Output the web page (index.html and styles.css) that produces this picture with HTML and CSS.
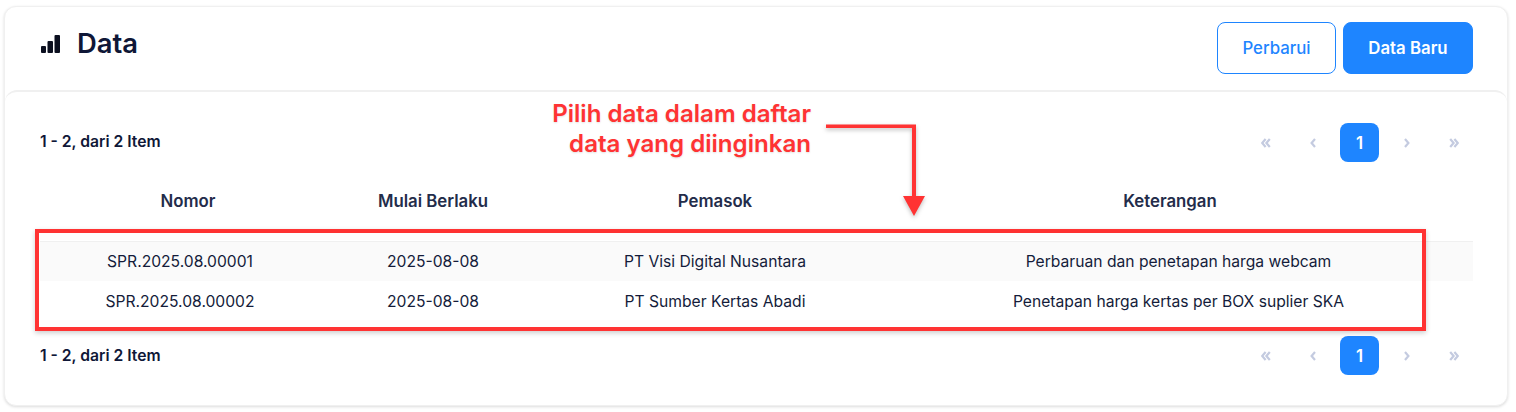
FILE: index.html
```html
<!DOCTYPE html>
<html lang="id">
<head>
<meta charset="utf-8">
<title>Data</title>
<link rel="stylesheet" href="styles.css">
</head>
<body>
<main class="card">
  <header class="card-head">
    <h1 class="title">
      <svg class="title-icon" viewBox="0 0 19 18" width="19" height="18" aria-hidden="true">
        <rect x="0" y="11" width="5" height="7" rx="1"/>
        <rect x="6.5" y="6" width="5.5" height="12" rx="1"/>
        <rect x="13.5" y="0" width="5.5" height="18" rx="1"/>
      </svg>
      Data
    </h1>
    <div class="actions">
      <button class="btn btn-outline">Perbarui</button>
      <button class="btn btn-solid">Data Baru</button>
    </div>
  </header>
  <section class="card-body">
    <div class="bar">
      <span class="count">1 - 2, dari 2 Item</span>
      <nav class="pager">
        <span class="page"><svg class="chev" viewBox="0 0 10 10" width="10" height="10"><path d="M4.6 1L1.2 5L4.6 9M8.8 1L5.4 5L8.8 9"/></svg></span>
        <span class="page"><svg class="chev" viewBox="0 0 10 10" width="10" height="10"><path d="M7 1L3.6 5L7 9"/></svg></span>
        <span class="page current">1</span>
        <span class="page"><svg class="chev" viewBox="0 0 10 10" width="10" height="10"><path d="M3 1L6.4 5L3 9"/></svg></span>
        <span class="page"><svg class="chev" viewBox="0 0 10 10" width="10" height="10"><path d="M1.2 1L4.6 5L1.2 9M5.4 1L8.8 5L5.4 9"/></svg></span>
      </nav>
    </div>
    <div class="thead">
      <div>Nomor</div><div>Mulai Berlaku</div><div>Pemasok</div><div>Keterangan</div>
    </div>
    <div class="tbody">
      <div class="row odd">
        <div>SPR.2025.08.00001</div><div>2025-08-08</div><div>PT Visi Digital Nusantara</div><div>Perbaruan dan penetapan harga webcam</div>
      </div>
      <div class="row">
        <div>SPR.2025.08.00002</div><div>2025-08-08</div><div>PT Sumber Kertas Abadi</div><div>Penetapan harga kertas per BOX suplier SKA</div>
      </div>
    </div>
    <div class="bar bar-bottom">
      <span class="count">1 - 2, dari 2 Item</span>
      <nav class="pager">
        <span class="page"><svg class="chev" viewBox="0 0 10 10" width="10" height="10"><path d="M4.6 1L1.2 5L4.6 9M8.8 1L5.4 5L8.8 9"/></svg></span>
        <span class="page"><svg class="chev" viewBox="0 0 10 10" width="10" height="10"><path d="M7 1L3.6 5L7 9"/></svg></span>
        <span class="page current">1</span>
        <span class="page"><svg class="chev" viewBox="0 0 10 10" width="10" height="10"><path d="M3 1L6.4 5L3 9"/></svg></span>
        <span class="page"><svg class="chev" viewBox="0 0 10 10" width="10" height="10"><path d="M1.2 1L4.6 5L1.2 9M5.4 1L8.8 5L5.4 9"/></svg></span>
      </nav>
    </div>
  </section>
</main>

<div class="note">Pilih data dalam daftar<br>data yang diinginkan</div>
<div class="frame"></div>
<svg class="arrow" width="110" height="100" viewBox="0 0 110 100" aria-hidden="true">
  <path d="M2 1.5H92V73H101L90 93L79 73H88V5H2Z" fill="#ff3333"/>
</svg>
</body>
</html>
```

FILE: styles.css
```css
* { box-sizing: border-box; }
html, body { margin: 0; height: 100%; }
body {
  background: #fff;
  font-family: Inter, "Liberation Sans", sans-serif;
  color: #141c3a;
  padding: 6px 8px 6px 4px;
  position: relative;
  overflow: hidden;
}
.card {
  height: 400px;
  border: 1px solid #f0f0f0;
  border-radius: 12px;
  box-shadow: 0 1px 3px rgba(0,0,0,.14);
  display: flex;
  flex-direction: column;
  background: #fff;
}
.card-head {
  height: 83px;
  flex: none;
  display: flex;
  justify-content: space-between;
  align-items: flex-start;
  padding: 15px 34px 0 36px;
}
.title {
  margin: 0;
  display: flex;
  align-items: center;
  gap: 17px;
  font-size: 27.4px;
  line-height: 43px;
  font-weight: 600;
  color: #0f1737;
}
.title-icon { fill: #0b0f1f; margin-top: 1px; }
.actions { display: flex; gap: 7px; }
.btn {
  height: 52px;
  border-radius: 8px;
  font: 500 16.8px Inter, "Liberation Sans", sans-serif;
}
.btn-outline { width: 119px; background: #fff; color: #1e85ff; border: 1px solid #1e85ff; }
.btn-solid { width: 130px; background: #1e85ff; color: #fff; border: 1px solid #1e85ff; font-weight: 600; }
.card-body {
  flex: 1;
  border-top: 2px solid #f0f0f0;
  border-radius: 12px 12px 0 0;
  padding: 31px 34px 0 35px;
}
.bar { display: flex; justify-content: space-between; align-items: center; height: 39px; }
.bar-bottom { margin-top: 15px; }
.count { font-size: 15.7px; font-weight: 600; color: #0f1737; margin-top: -2px; }
.bar-bottom .count { margin-top: -1px; }
.pager { display: flex; gap: 8px; }
.page {
  width: 39px;
  height: 39px;
  display: flex;
  align-items: center;
  justify-content: center;
  border-radius: 8px;
}
.chev { fill: none; stroke: #c4cbe0; stroke-width: 2.2; }
.page.current { background: #1e85ff; color: #fff; font-size: 16.8px; font-weight: 600; }
.thead {
  display: grid;
  grid-template-columns: 296px 194px 370px 540px 33px;
  height: 80px;
  padding-top: 18px;
  text-align: center;
  font-size: 16.8px;
  line-height: 42px;
  font-weight: 600;
  color: #232c4a;
  border-bottom: 1px solid #f0f0f0;
  align-items: start;
}
.row {
  display: grid;
  grid-template-columns: 280px 226px 338px 589px;
  height: 40px;
  align-items: center;
  text-align: center;
  font-size: 15.65px;
  color: #141c3a;
}
.row.odd { background: #fafafa; height: 39px; }
.note {
  position: absolute;
  top: 99px;
  left: 500px;
  width: 311px;
  text-align: right;
  font-size: 24.1px;
  line-height: 30px;
  font-weight: 600;
  color: #ff3333;
  text-shadow: 0 1px 2px rgba(0,0,0,.12);
}
.frame {
  position: absolute;
  left: 35px;
  top: 229px;
  width: 1391px;
  height: 102px;
  border: 4px solid #ff3333;
  box-shadow: 0 2px 5px rgba(0,0,0,.2);
}
.arrow {
  position: absolute;
  left: 824px;
  top: 123px;
  filter: drop-shadow(0 2px 2px rgba(0,0,0,.25));
}
```
